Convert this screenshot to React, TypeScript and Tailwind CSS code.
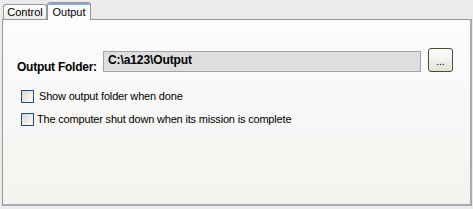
import React from "react";

const font = { fontFamily: "'Liberation Sans', Arial, sans-serif" };

function Checkbox({ label, gap }: { label: string; gap: string }) {
  return (
    <div className="flex items-center h-[13px]">
      <div className="w-[13px] h-[13px] border border-[#1c5180] bg-gradient-to-br from-[#d6d6d0] to-white shrink-0" />
      <span className={`${gap} text-[11px] leading-[13px] tracking-[-0.18px] text-black`}>{label}</span>
    </div>
  );
}

export default function App() {
  return (
    <div
      className="w-[473px] h-[209px] bg-[#ebebeb] pl-[2px] pt-[2px] overflow-hidden"
      style={font}
    >
      <div className="flex items-end h-[18px] pl-[1px] relative z-10">
        <div className="w-[44px] h-[15px] mb-[1px] border border-b-0 border-[#919b9c] rounded-t-[3px] bg-gradient-to-b from-white to-[#ecebe6] flex items-center justify-center text-[11px] leading-[13px] text-black">
          Control
        </div>
        <div className="w-[44px] h-[18px] border border-b-0 border-[#919b9c] rounded-t-[3px] bg-[#fcfcfe] flex flex-col overflow-hidden">
          <div className="h-[2px] bg-[#8ea3d6] shrink-0" />
          <div className="flex-1 flex items-center justify-center text-[11px] leading-[13px] text-black pb-[1px]">
            Output
          </div>
        </div>
      </div>
      <div className="-mt-px w-[470px] h-[187px] border border-[#919b9c] border-r-2 border-b-2 border-r-[#a5adb0] border-b-[#a5adb0] bg-gradient-to-b from-[#fcfcfe] to-[#f4f3ee]">
        <div className="flex items-start mt-[28px] pl-[14px]">
          <div className="mt-[12px] w-[86px] text-[12px] leading-[14px] font-bold tracking-[-0.25px] text-black">
            Output Folder:
          </div>
          <div className="mt-[3px] w-[318px] h-[21px] border border-[#a0a4a6] bg-[#dedede] flex items-center pl-[4px] pb-[3px] text-[12px] font-bold tracking-[-0.1px] text-black">
            C:\a123\Output
          </div>
          <div className="ml-[7px] w-[25px] h-[24px] border border-[#4f4634] rounded-[3px] bg-gradient-to-b from-white to-[#e2e2da] flex items-end justify-center pb-[6px] text-[11px] leading-[8px] text-black">
            ...
          </div>
        </div>
        <div className="flex flex-col gap-[10px] mt-[16px] pl-[18px]">
          <Checkbox label="Show output folder when done" gap="ml-[5px]" />
          <Checkbox label="The computer shut down when its mission is complete" gap="ml-[3px]" />
        </div>
      </div>
    </div>
  );
}
